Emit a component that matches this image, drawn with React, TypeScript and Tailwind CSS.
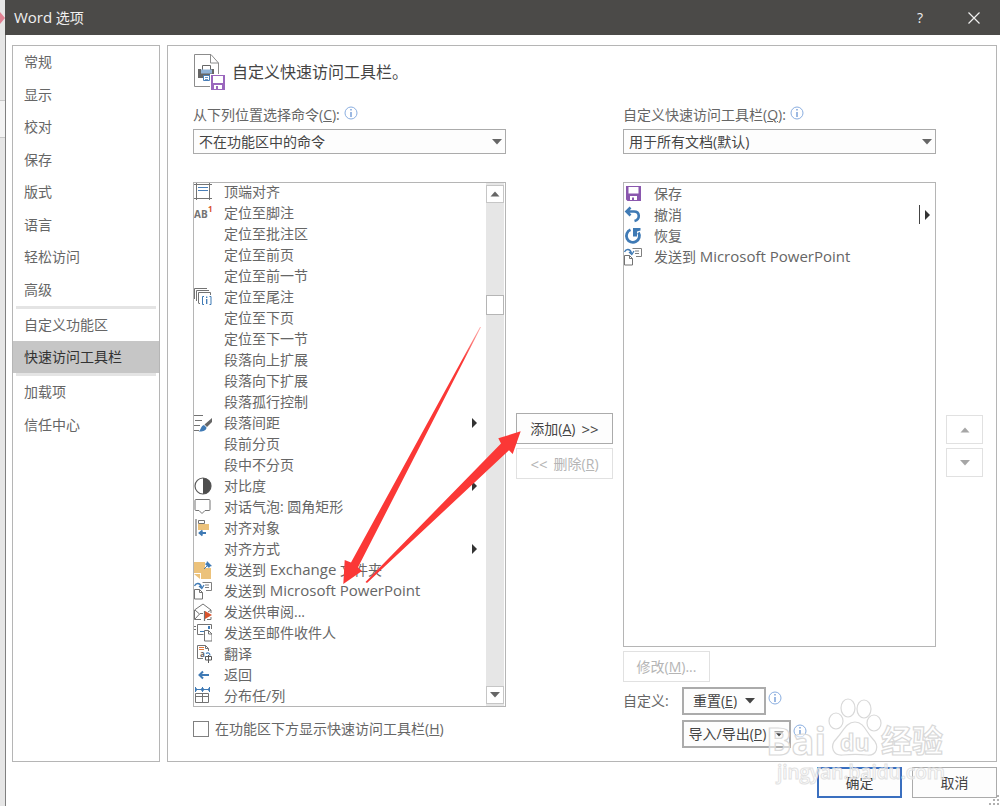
import type { ReactNode } from 'react'

const navGroups = [
  { height: 'h-[260px]', items: ['常规', '显示', '校对', '保存', '版式', '语言', '轻松访问', '高级'] },
  { height: 'h-16', items: ['自定义功能区', '快速访问工具栏'] },
  { height: 'h-[65px]', items: ['加载项', '信任中心'] },
]

type Command = { label: string; latin?: string; rest?: string; icon?: ReactNode; menu?: boolean; split?: boolean }

function Glyph({ children }: { children: ReactNode }) {
  return (
    <svg viewBox="0 0 18 18" className="w-[18px] h-[18px]" fill="none" aria-hidden="true">
      {children}
    </svg>
  )
}

const topAlign = (
  <Glyph>
    <path d="M2.5 0v17M15.5 0v17M0 1.5h18M0 15.5h18" stroke="#737373" />
    <path d="M4 4.5h10M4 7.5h10" stroke="#4a7fb8" />
  </Glyph>
)

const footnote = (
  <Glyph>
    <text x="0" y="14" fontSize="10" fontWeight="700" fill="#737373" fontFamily="Open Sans">AB</text>
    <text x="14" y="8" fontSize="8" fontWeight="700" fill="#d9532c" fontFamily="Open Sans">1</text>
  </Glyph>
)

const endnote = (
  <Glyph>
    <path d="M0.5 11V0.5H13M2.5 13V2.5H15M4.5 15V4.5H16.5V7M4.5 15.5H6" stroke="#737373" />
    <path d="M10 8.5H8.5V16.5H10M15.5 8.5H17V16.5H15.5" stroke="#3f7ab5" />
    <path d="M12.7 8.5V10M12.7 11V16" stroke="#3f7ab5" strokeWidth="1.3" />
  </Glyph>
)

const spacing = (
  <Glyph>
    <path d="M0 1.5h9M1 6.5h7M0 11.5h6M0 16.5h5" stroke="#737373" />
    <path d="M18 4v4l-5 5-2.5-2.5z" fill="#666" />
    <path d="M10 11l2.500 2.500c0 3-4 4.500-8 4 2.500-1 2-5.500 5.500-6.500z" fill="#3f7ab5" />
  </Glyph>
)

const contrast = (
  <Glyph>
    <circle cx="9" cy="9" r="8" stroke="#595959" strokeWidth="1.2" />
    <path d="M9 1a8 8 0 0 1 0 16z" fill="#4d4d4d" />
  </Glyph>
)

const bubble = (
  <Glyph>
    <path d="M2 1.5h13q1 0 1 1v9q0 1-1 1h-4l-3 3-3-3H2q-1 0-1-1v-9q0-1 1-1z" stroke="#737373" />
  </Glyph>
)

const alignObject = (
  <Glyph>
    <path d="M2 0v17" stroke="#737373" strokeWidth="1.2" />
    <path d="M4.5 1.5h6v3h-6z" stroke="#737373" />
    <path d="M4 5h11v6H4z" fill="#ecc27b" />
    <path d="M12 14H6M8.5 11.5L5.5 14l3 2.5" stroke="#3f7ab5" strokeWidth="1.8" />
  </Glyph>
)

const exchange = (
  <Glyph>
    <path d="M0 1h11v6h6v11H7v-6H0z" fill="#ecc27b" />
    <path d="M0 13h6v5z" fill="#ecc27b" />
    <path d="M10 8l3-3" stroke="#3f7ab5" />
    <path d="M13 0l5 5-2 .5-1 1.5-4-4 1.500-1z" fill="#3f7ab5" />
  </Glyph>
)

const sendPowerPoint = (
  <Glyph>
    <path d="M8.5 0.5h9v8H12" stroke="#808080" />
    <path d="M11 3h4M11 5.5h4" stroke="#808080" />
    <path d="M0.5 4C2 0.5 6 0.5 7.5 5M5 4l2.8 2.5L10 3" stroke="#3f7ab5" strokeWidth="1.3" />
    <path d="M0.5 7.5h5l3 3v6.5h-8zM5.5 7.5v3h3" stroke="#737373" />
  </Glyph>
)

const sendReview = (
  <Glyph>
    <path d="M7 16.5H0.5V7L9 1l8 6v3M17 14v2.5h-4M1 7l4.5 4M17 7l-3 2M1 16l5-5.5h3" stroke="#737373" />
    <path d="M10.5 8v10" stroke="#737373" strokeWidth="1.2" />
    <path d="M11 8l7 4-7 4z" fill="#d9532c" />
  </Glyph>
)

const sendMail = (
  <Glyph>
    <path d="M0 2.5h2M0 5.5h2" stroke="#737373" />
    <path d="M9.5 10.5H3.5V0.5h14V5" stroke="#737373" />
    <path d="M14 2h2v3h-2z" fill="#3f7ab5" />
    <path d="M6 7.5h4" stroke="#3f7ab5" />
    <path d="M10.5 6.5h4l3.5 3.5v7h-7.500zM14.5 6.5V10H18" stroke="#737373" />
  </Glyph>
)

const translate = (
  <Glyph>
    <path d="M9 13.5H3.5V0.5h8l3 3V6M11.5 0.5v3h3" stroke="#737373" />
    <path d="M5 2.5h5M5 4.5h5" stroke="#e0793c" />
    <text x="6" y="12" fontSize="8" fontWeight="700" fill="#666" fontFamily="Open Sans">a</text>
    <path d="M12 8.5c2-1.5 4-.5 4 2" stroke="#3f7ab5" strokeWidth="1.2" />
    <path d="M11.5 11.5h6v3.5h-6zM14.5 10v8" stroke="#595959" />
  </Glyph>
)

const back = (
  <Glyph>
    <path d="M15 9H6M9 5.5L5.5 9 9 12.5" stroke="#3f7ab5" strokeWidth="2" />
  </Glyph>
)

const columns = (
  <Glyph>
    <path d="M1.5 0v5M8.5 0v5M15.5 0v5M1 2.5h15" stroke="#3f7ab5" />
    <path d="M3 1L1.500 2.500 3 4M14 1l1.500 1.500L14 4M7 1l1.500 1.500L7 4M10 1L8.500 2.500 10 4" stroke="#3f7ab5" strokeWidth="0.7" />
    <path d="M1.5 6.5h13v9h-13zM8.5 6.5v9M1.5 9.5h13" stroke="#737373" />
  </Glyph>
)

const save = (
  <Glyph>
    <path fillRule="evenodd" d="M2 1h15v15H3.5L2 14.5zM4.500 2v6.500h10V2zM6 11v4h2v-2.500h2V15h3v-4z" fill="#8a57ae" />
  </Glyph>
)

const undo = (
  <Glyph>
    <path d="M6.5 1.5L2.5 5.5l4 4M3 5.5h7c6 0 6.500 8 .5 9.500" stroke="#3f7ab5" strokeWidth="2.6" />
  </Glyph>
)

const redo = (
  <Glyph>
    <path d="M6.5 2.8A6.5 6.5 0 1 0 14.500 5.500" stroke="#3f7ab5" strokeWidth="2.8" />
    <path d="M9 1h7.500v2.500L13 4.500v5H9z" fill="#3f7ab5" />
  </Glyph>
)

const available: Command[] = [
  { label: '顶端对齐', icon: topAlign },
  { label: '定位至脚注', icon: footnote },
  { label: '定位至批注区' },
  { label: '定位至前页' },
  { label: '定位至前一节' },
  { label: '定位至尾注', icon: endnote },
  { label: '定位至下页' },
  { label: '定位至下一节' },
  { label: '段落向上扩展' },
  { label: '段落向下扩展' },
  { label: '段落孤行控制' },
  { label: '段落间距', icon: spacing, menu: true },
  { label: '段前分页' },
  { label: '段中不分页' },
  { label: '对比度', icon: contrast, menu: true },
  { label: '对话气泡: 圆角矩形', icon: bubble },
  { label: '对齐对象', icon: alignObject },
  { label: '对齐方式', menu: true },
  { label: '发送到 ', latin: 'Exchange', rest: ' 文件夹', icon: exchange },
  { label: '发送到 ', latin: 'Microsoft PowerPoint', icon: sendPowerPoint },
  { label: '发送供审阅...', icon: sendReview },
  { label: '发送至邮件收件人', icon: sendMail },
  { label: '翻译', icon: translate },
  { label: '返回', icon: back },
  { label: '分布任/列', icon: columns },
]

const current: Command[] = [
  { label: '保存', icon: save },
  { label: '撤消', icon: undo, split: true },
  { label: '恢复', icon: redo },
  { label: '发送到 ', latin: 'Microsoft PowerPoint', icon: sendPowerPoint },
]

function Triangle({ dir, className = '' }: { dir: 'up' | 'down' | 'right'; className?: string }) {
  if (dir === 'right') {
    return (
      <svg viewBox="0 0 5 10" className="w-[5px] h-[10px]" aria-hidden="true">
        <path d="M0 0l5 5-5 5z" fill="#333" />
      </svg>
    )
  }
  return (
    <svg viewBox="0 0 10 6" className={`w-[10px] h-[6px] ${className}`} fill="currentColor" aria-hidden="true">
      <path d={dir === 'up' ? 'M0.5 5.5L5 0.5l4.5 5z' : 'M0 0h10L5 5.5z'} />
    </svg>
  )
}

function Info() {
  return (
    <svg viewBox="0 0 14 14" className="w-[14px] h-[14px] shrink-0" fill="none" aria-hidden="true">
      <circle cx="7" cy="7" r="6" stroke="#8aaee0" />
      <path d="M7 3v1.5M7 6v5" stroke="#5b8bd0" strokeWidth="1.2" />
    </svg>
  )
}

function Row({ item }: { item: Command }) {
  return (
    <li role="option" aria-selected={false} className="flex h-[21px] shrink-0 items-center gap-3 pr-[9px]">
      <span className="w-[18px] shrink-0">{item.icon}</span>
      <span className="flex-1 whitespace-nowrap">
        {item.label}
        {item.latin && <span className="text-[15px]">{item.latin}</span>}
        {item.rest}
      </span>
      {item.menu && <Triangle dir="right" />}
      {item.split && (
        <span className="flex h-[19px] items-center border-l border-[#444] pl-[5px] -mr-1">
          <Triangle dir="right" />
        </span>
      )}
    </li>
  )
}

function Picker({ id, label, mnemonic, value }: { id: string; label: string; mnemonic: string; value: string }) {
  return (
    <div>
      <div className="flex h-[18px] items-center gap-1">
        <label htmlFor={id} className="whitespace-nowrap">
          {label}(<u>{mnemonic}</u>):
        </label>
        <span className="mb-1">
          <Info />
        </span>
      </div>
      <div className="relative mt-[5px]">
        <select id={id} className="block h-[25px] w-full appearance-none border border-[#ababab] bg-[#fdfdfd] pl-[5px] pr-6 text-[#444] outline-none">
          <option>{value}</option>
        </select>
        <Triangle dir="down" className="pointer-events-none absolute right-1 top-[10px] text-[#666]" />
      </div>
    </div>
  )
}

function HeaderIcon() {
  return (
    <svg viewBox="0 0 33 37" className="w-[33px] h-[37px]" fill="none" aria-hidden="true">
      <path d="M1.5 0.5h16.5l7.5 8.5v12M17.5 0.5v8.5h8M1.5 0.5v32h16" stroke="#8c8c8c" />
      <path d="M5 15h3v3h10v-3h3v9H5z" fill="#666" />
      <path d="M9.5 11.5h8v6h-8z" fill="#fff" stroke="#666" />
      <path d="M8 16.5h11M8 18.5h11" stroke="#92b4d8" strokeWidth="2" />
      <path d="M10.5 21.5h6v5h-6z" fill="#fff" stroke="#4a7fb8" />
      <path d="M12 23.5h3M12 25.5h3" stroke="#4a7fb8" strokeWidth="0.8" />
      <path d="M17 20h16v17H17z" fill="#fff" />
      <path fillRule="evenodd" d="M18 21h14v15H18zM20 22v7h10v-7zM21 31v4h2v-3h2v3h4v-4z" fill="#9a66bd" />
    </svg>
  )
}

function RedArrows() {
  return (
    <svg viewBox="0 0 1000 806" className="pointer-events-none absolute left-0 top-0 w-[1000px] h-[806px]" aria-hidden="true">
      <defs>
        <linearGradient id="fade" gradientUnits="userSpaceOnUse" x1="480" y1="327" x2="463" y2="360">
          <stop offset="0" stopColor="#fb3836" stopOpacity="0.4" />
          <stop offset="1" stopColor="#fb3836" />
        </linearGradient>
      </defs>
      <path d="M481 327L358 567.3 362 571 343.3 584 344.7 560 351 562.5 480 327z" fill="url(#fade)" />
      <path d="M365.500 582L501 443.5 498.3 438.3 520.7 431.3 512.7 454 509 450.3 367 583z" fill="#fb3836" />
    </svg>
  )
}

function Watermark() {
  return (
    <svg
      viewBox="0 0 190 66"
      className="pointer-events-none absolute bottom-11 right-[46px] w-[190px] h-[66px]"
      fill="#fff"
      fillOpacity="0.55"
      stroke="#d9d9d9"
      strokeWidth="1.2"
      fontFamily="Open Sans, Noto Sans CJK SC, sans-serif"
      fontWeight="700"
      aria-hidden="true"
    >
      <ellipse cx="72" cy="25" rx="7" ry="8" />
      <ellipse cx="84" cy="12" rx="7" ry="9" />
      <ellipse cx="100" cy="13" rx="7" ry="9" />
      <ellipse cx="110" cy="27" rx="7" ry="8" />
      <path d="M91 26c9 0 11 10 17 16 9 9 4 18-5 17-8-1-15-1-24 0-9 1-15-8-6-17 6-6 9-16 18-16z" />
      <text x="2" y="59" fontSize="38">Bai</text>
      <text x="76" y="55" fontSize="23">du</text>
      <text x="117" y="56" fontSize="31">经验</text>
    </svg>
  )
}

export default function App() {
  const button = 'flex items-center justify-center whitespace-nowrap bg-[#fdfdfd] text-[#444]'

  return (
    <div className="relative flex min-h-screen overflow-hidden bg-white font-['Open_Sans','Noto_Sans_CJK_SC',sans-serif] text-[14px] leading-5 text-[#666]">
      <div className="flex w-[5px] shrink-0 flex-col bg-[#e6e6e6]">
        <svg viewBox="0 0 5 12" className="mt-3 w-[5px] h-3" aria-hidden="true">
          <path d="M0 0l5 6-5 6z" fill="#e08192" />
        </svg>
        <div className="mt-[76px] h-[38px] border-y border-[#c8c8c8] bg-[#f3f3f3]" />
      </div>

      <div className="flex min-w-0 flex-1 flex-col">
        <header className="flex h-[35px] items-center bg-[#4b4a48] pl-[9px] pr-[18px] text-[#f0f0f0]">
          <h1 className="flex-1">
            <span className="text-[15px]">Word</span> 选项
          </h1>
          <button aria-label="帮助" className="mr-[38px] w-4 text-center">?</button>
          <button aria-label="关闭" className="flex w-4 justify-center">
            <svg viewBox="0 0 12 12" className="w-3 h-3" stroke="#f0f0f0" strokeWidth="1.2" aria-hidden="true">
              <path d="M0.5 0.5l11 11M11.5 0.5l-11 11" />
            </svg>
          </button>
        </header>

        <div className="flex flex-1 flex-col border-l border-[#808080] pb-2 pl-[6px] pr-[3px] pt-[10px]">
          <div className="flex flex-1 gap-[7px]">
            <nav className="w-[148px] shrink-0 border border-[#b5b5b5]">
              {navGroups.map((group, i) => (
                <div key={i}>
                  {i > 0 && <div className="mx-[3px] h-[3px] bg-[#e4e4e4]" />}
                  <ul className={`grid auto-rows-fr ${group.height}`}>
                    {group.items.map((item) => (
                      <li key={item}>
                        <a
                          href="#"
                          className={`flex h-full items-center pl-[11px] ${item === '快速访问工具栏' ? 'bg-[#c6c6c6] text-[#333]' : ''}`}
                        >
                          {item}
                        </a>
                      </li>
                    ))}
                  </ul>
                </div>
              ))}
            </nav>

            <main className="min-w-0 flex-1 border border-[#b5b5b5] pb-3 pl-[25px] pr-[13px] pt-2">
              <div className="flex h-9 items-center gap-[6px]">
                <HeaderIcon />
                <h2 className="text-[16px] text-[#444]">自定义快速访问工具栏。</h2>
              </div>

              <div className="mt-4 grid grid-cols-[minmax(0,1fr)_97px_minmax(0,1fr)_37px] gap-x-[10px]">
                <section>
                  <Picker id="source" label="从下列位置选择命令" mnemonic="C" value="不在功能区中的命令" />
                  <div className="mt-7 flex h-[525px] border border-[#b5b5b5]">
                    <ul role="listbox" aria-label="命令" className="flex min-w-0 flex-1 flex-col justify-end overflow-hidden">
                      {available.map((item) => (
                        <Row key={item.label + (item.latin ?? '')} item={item} />
                      ))}
                    </ul>
                    <div className="mr-px flex w-[18px] flex-col bg-[#e6e6e6] py-[2px]">
                      <button aria-label="向上滚动" className="flex h-[18px] items-center justify-center border border-[#c6c6c6] bg-white text-[#666]">
                        <Triangle dir="up" />
                      </button>
                      <div className="mb-auto mt-[92px] h-5 border border-[#b5b5b5] bg-white" />
                      <button aria-label="向下滚动" className="flex h-[18px] items-center justify-center border border-[#c6c6c6] bg-white text-[#666]">
                        <Triangle dir="down" />
                      </button>
                    </div>
                  </div>
                  <label className="mt-3 flex items-center gap-[6px] whitespace-nowrap">
                    <input type="checkbox" className="h-4 w-4 appearance-none border border-[#808080] bg-white" />
                    <span>
                      在功能区下方显示快速访问工具栏(<u>H</u>)
                    </span>
                  </label>
                </section>

                <div className="flex flex-col gap-1 pt-[307px]">
                  <button className={`${button} h-[31px] gap-[6px] border border-[#ababab]`}>
                    <span>添加(<u>A</u>)</span>
                    <span className="text-[15px]">&gt;&gt;</span>
                  </button>
                  <button disabled className="flex h-[31px] items-center justify-center gap-[6px] whitespace-nowrap border border-[#e1e1e1] text-[#b5b5b5]">
                    <span className="text-[15px]">&lt;&lt;</span>
                    <span>删除(<u>R</u>)</span>
                  </button>
                </div>

                <section>
                  <Picker id="target" label="自定义快速访问工具栏" mnemonic="Q" value="用于所有文档(默认)" />
                  <ul role="listbox" aria-label="快速访问工具栏" className="mt-7 h-[465px] border border-[#b5b5b5]">
                    {current.map((item) => (
                      <Row key={item.label} item={item} />
                    ))}
                  </ul>
                  <button disabled className="mt-1 h-[31px] w-[87px] border border-[#e1e1e1] text-[#b5b5b5]">
                    修改(<u>M</u>)...
                  </button>
                  <div className="mt-[5px] flex">
                    <span className="w-[59px] leading-7">自定义:</span>
                    <div className="flex flex-col gap-[5px]">
                      <div className="flex gap-[2px]">
                        <button className={`${button} h-7 w-[84px] gap-2 border-2 border-[#ababab]`}>
                          <span>重置(<u>E</u>)</span>
                          <Triangle dir="down" />
                        </button>
                        <span className="mt-1"><Info /></span>
                      </div>
                      <div className="flex gap-[2px]">
                        <button className={`${button} h-7 w-[109px] gap-2 border-2 border-[#ababab]`}>
                          <span>导入/导出(<u>P</u>)</span>
                          <Triangle dir="down" />
                        </button>
                        <span className="mt-1"><Info /></span>
                      </div>
                    </div>
                  </div>
                </section>

                <div className="flex flex-col gap-1 pt-[309px] text-[#a6a6a6]">
                  <button disabled aria-label="上移" className="flex h-[29px] items-center justify-center border border-[#e1e1e1]">
                    <Triangle dir="up" />
                  </button>
                  <button disabled aria-label="下移" className="flex h-[29px] items-center justify-center border border-[#e1e1e1]">
                    <Triangle dir="down" />
                  </button>
                </div>
              </div>
            </main>
          </div>

          <footer className="mt-[5px] flex justify-end gap-[10px]">
            <button className={`${button} h-[31px] w-[85px] border-2 border-[#3a6fbf]`}>确定</button>
            <button className={`${button} h-[31px] w-[85px] border border-[#ababab]`}>取消</button>
          </footer>
        </div>
      </div>

      <svg viewBox="0 0 12 12" className="absolute bottom-0 right-0 w-3 h-3" fill="#b0b0b0" aria-hidden="true">
        <path d="M9 1h2v2H9zM5 5h2v2H5zM9 5h2v2H9zM1 9h2v2H1zM5 9h2v2H5zM9 9h2v2H9z" />
      </svg>
      <RedArrows />
      <Watermark />
      <span className="pointer-events-none absolute bottom-5 right-[55px] text-[19px] font-semibold leading-7 text-white/50 [-webkit-text-stroke:1px_#e2e2e2]">
        jingyan.baidu.com
      </span>
    </div>
  )
}
